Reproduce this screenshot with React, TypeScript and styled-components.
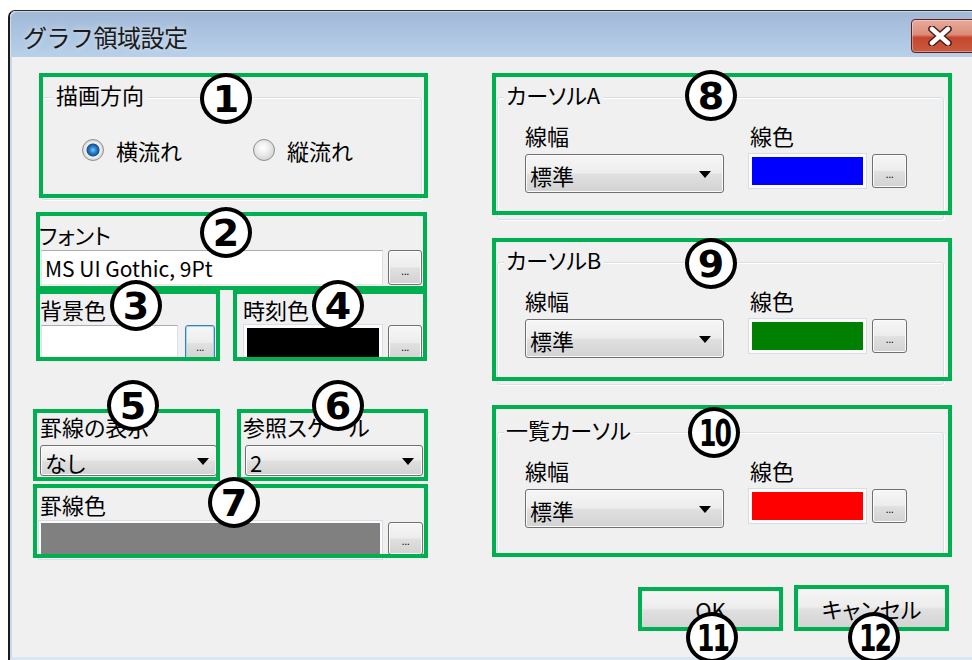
import React from 'react'
import styled, { createGlobalStyle } from 'styled-components'

const GlobalStyle = createGlobalStyle`
  * { box-sizing: border-box; }
  html, body { margin: 0; padding: 0; background: #ffffff; overflow: hidden; }
  body {
    width: 972px;
    height: 660px;
    font-family: "Noto Sans CJK JP", "Noto Sans", sans-serif;
    color: #000;
  }
`;

const GREEN = '#00b050';
const FACE = '#f0f0f0';
const BUTTON_BG = 'linear-gradient(180deg, #f6f6f6 0%, #ededed 48%, #e0e0e0 52%, #d2d2d2 100%)';

const Dialog = styled.div`
  width: 1010px;
  height: 650px;
  margin: 10px 0 0 8px;
  border-left: 2px solid #1b1b1b;
  border-top: 1px solid #2b2b2b;
  border-top-left-radius: 7px;
  display: flex;
  flex-direction: column;
  background: ${FACE};
`;

const TitleBar = styled.div`
  height: 46px;
  flex: none;
  display: flex;
  align-items: flex-start;
  justify-content: space-between;
  padding-left: 13px;
  border-top-left-radius: 6px;
  background: linear-gradient(180deg, #a1b9d7 0%, #adc5e1 55%, #b9d0e9 100%);
  box-shadow: inset 1px 1px 0 rgba(255, 255, 255, 0.45);
`;

const Title = styled.span`
  margin-top: 12px;
  font-size: 24px;
  line-height: 28px;
  color: #1a1a1a;
  letter-spacing: -0.5px;
  text-shadow: 0 0 6px rgba(255, 255, 255, 0.6);
`;

const CloseButton = styled.div`
  width: 78px;
  height: 34px;
  margin: 8px 29px 0 0;
  padding-left: 15px;
  display: flex;
  align-items: center;
  border: 1px solid #5e2119;
  border-radius: 4px;
  background: linear-gradient(180deg, #e8aa9b 0%, #dc8d79 45%, #c5472d 55%, #c95b40 100%);
  box-shadow: inset 0 0 0 1px rgba(255, 255, 255, 0.35);
`;

const Client = styled.div`
  flex: 1;
  display: flex;
  gap: 64px;
  padding: 16px 0 0 21px;
  border-left: 2px solid #c9d9ec;
  border-bottom: 3px solid #dce6f1;
  background: ${FACE};
`;

const Column = styled.div<{ $w: number }>`
  width: ${p => p.$w}px;
  flex: none;
  display: flex;
  flex-direction: column;
`;

const PairRow = styled.div<{ $mt?: number }>`
  display: flex;
  align-items: flex-start;
  margin-top: ${p => p.$mt ?? 0}px;
`;

// green annotation frame, drawn over what it marks
const Marked = styled.div<{ $w: number; $h: number; $ml?: number; $mt?: number }>`
  position: relative;
  flex: none;
  width: ${p => p.$w}px;
  height: ${p => p.$h}px;
  margin-left: ${p => p.$ml ?? 0}px;
  margin-top: ${p => p.$mt ?? 0}px;

  &::after {
    content: '';
    position: absolute;
    inset: 0;
    border: 4px solid ${GREEN};
    pointer-events: none;
    z-index: 2;
  }
`;

const Badge = styled.div<{ $x: number; $y: number }>`
  position: absolute;
  left: ${p => p.$x}px;
  top: ${p => p.$y}px;
  width: 52px;
  height: 51px;
  border: 4px solid #000;
  border-radius: 50%;
  background: #fff;
  display: flex;
  align-items: center;
  justify-content: center;
  z-index: 3;
  font-family: "DejaVu Sans", "Liberation Sans", sans-serif;
  font-weight: bold;
  font-size: 38px;
  line-height: 1;
  color: #000;
`;

const BadgeDigits = styled.span<{ $two?: boolean }>`
  display: inline-block;
  margin-top: 1px;
  letter-spacing: ${p => (p.$two ? '-3px' : '0')};
  transform: ${p => (p.$two ? 'scaleX(0.66)' : 'none')};
`;

const GroupFrame = styled.div<{ $l: number; $t: number; $w: number; $h: number }>`
  position: relative;
  flex: none;
  margin: ${p => p.$t}px 0 0 ${p => p.$l}px;
  width: ${p => p.$w}px;
  height: ${p => p.$h}px;
  border: 1px solid #d5dfe5;
  border-radius: 3px;
  box-shadow: inset 1px 1px 0 #ffffff, 1px 1px 0 #ffffff;
`;

const GroupCaption = styled.span<{ $l: number }>`
  position: absolute;
  top: -17px;
  left: ${p => p.$l}px;
  padding: 0 3px 0 2px;
  background: ${FACE};
  font-size: 22px;
  line-height: 26px;
  white-space: nowrap;
  font-feature-settings: "palt";
`;

const Label = styled.div<{ $pl?: number; $pt?: number }>`
  padding: ${p => p.$pt ?? 0}px 0 0 ${p => p.$pl ?? 0}px;
  font-size: 22px;
  line-height: 26px;
  white-space: nowrap;
  font-feature-settings: "palt";
`;

const FieldRow = styled.div<{ $ml?: number; $mt?: number; $gap: number }>`
  display: flex;
  align-items: flex-start;
  gap: ${p => p.$gap}px;
  margin: ${p => p.$mt ?? 0}px 0 0 ${p => p.$ml ?? 0}px;
`;

const RadioRow = styled.div`
  display: grid;
  grid-template-columns: 171px auto;
  align-items: center;
  margin: 40px 0 0 40px;
`;

const RadioOption = styled.label`
  display: flex;
  align-items: center;
  gap: 12px;
  font-size: 22px;
  line-height: 24px;
`;

const Radio = styled.span<{ $on?: boolean }>`
  width: 22px;
  height: 22px;
  flex: none;
  border-radius: 50%;
  border: 1px solid #8e8f8f;
  background: ${p =>
    p.$on
      ? 'radial-gradient(circle at 50% 50%, #7cc7f5 0, #2c86d4 3px, #17508f 6px, #f6f6f6 7px, #e9e9e9 8px, #cdcdcd 11px)'
      : 'radial-gradient(circle at 45% 40%, #ffffff 0, #f1f1f1 5px, #d9d9d9 11px)'};
`;

const TextBox = styled.div<{ $w: number; $h: number }>`
  width: ${p => p.$w}px;
  height: ${p => p.$h}px;
  flex: none;
  display: flex;
  align-items: center;
  padding-left: 3px;
  background: #ffffff;
  border: 1px solid;
  border-color: #abadb3 #dbdfe6 #e3e9ef #e2e3ea;
  font-size: 21px;
  white-space: nowrap;
`;

const Swatch = styled.div<{ $w: number; $h: number; $color: string; $ring: number; $mt?: number }>`
  width: ${p => p.$w}px;
  height: ${p => p.$h}px;
  flex: none;
  margin-top: ${p => p.$mt ?? 0}px;
  background: ${p => p.$color};
  border: 1px solid #d6dde6;
  box-shadow: inset 0 0 0 ${p => p.$ring}px #fbfbfb;
`;

const DotButton = styled.div<{ $w: number; $h: number; $focus?: boolean; $mt?: number }>`
  width: ${p => p.$w}px;
  height: ${p => p.$h}px;
  flex: none;
  margin-top: ${p => p.$mt ?? 0}px;
  display: flex;
  align-items: flex-end;
  justify-content: center;
  padding-bottom: 7px;
  border: 1px solid ${p => (p.$focus ? '#3c7fb1' : '#707070')};
  border-radius: 3px;
  background: ${BUTTON_BG};
  box-shadow: inset 0 0 0 1px ${p => (p.$focus ? '#9fd6f4' : '#fbfbfb')};
  font-family: "DejaVu Sans", sans-serif;
  font-size: 10px;
  line-height: 1;
  letter-spacing: -0.5px;
`;

const Combo = styled.div<{ $w: number; $h: number; $pr: number }>`
  width: ${p => p.$w}px;
  height: ${p => p.$h}px;
  flex: none;
  display: flex;
  align-items: center;
  justify-content: space-between;
  padding: 2px ${p => p.$pr}px 0 4px;
  border: 1px solid #707070;
  border-radius: 3px;
  background: ${BUTTON_BG};
  box-shadow: inset 0 0 0 1px #fbfbfb;
  font-size: 22px;
  font-feature-settings: "palt";
`;

const ComboArrow = styled.span`
  width: 0;
  height: 0;
  border-left: 6px solid transparent;
  border-right: 6px solid transparent;
  border-top: 7px solid #000;
`;

const CursorGrid = styled.div`
  display: grid;
  grid-template-columns: 223px auto;
  margin: 24px 0 0 27px;
`;

const ButtonRow = styled.div`
  display: flex;
  align-items: flex-start;
  justify-content: flex-end;
  gap: 11px;
  padding-right: 3px;
  margin-top: 28px;
`;

const PushButton = styled.div`
  width: 100%;
  height: 100%;
  display: flex;
  align-items: center;
  justify-content: center;
  border: 1px solid #707070;
  border-radius: 3px;
  background: ${BUTTON_BG};
  box-shadow: inset 0 0 0 1px #fbfbfb;
  font-size: 22px;
  font-feature-settings: "palt";
`;

const CloseIcon = () => (
  <svg width="26" height="20" viewBox="0 0 26 20">
    <path d="M5 3 L21 17 M21 3 L5 17" stroke="#4d1c15" strokeWidth="7.5" strokeLinecap="round" fill="none" />
    <path d="M5 3 L21 17 M21 3 L5 17" stroke="#ffffff" strokeWidth="4.5" strokeLinecap="round" fill="none" />
  </svg>
);

type NumProps = { n: number; x: number; y: number }

const Num = ({ n, x, y }: NumProps) => (
  <Badge $x={x} $y={y}>
    <BadgeDigits $two={n > 9}>{n}</BadgeDigits>
  </Badge>
);

type CursorProps = {
  caption: string
  color: string
  mt: number
  h: number
  frameTop: number
  n: number
  bx: number
  by: number
}

const CursorGroup = ({ caption, color, mt, h, frameTop, n, bx, by }: CursorProps) => (
  <Marked $w={460} $h={h} $mt={mt}>
    <GroupFrame $l={5} $t={frameTop} $w={447} $h={123}>
      <GroupCaption $l={6}>{caption}</GroupCaption>
      <CursorGrid>
        <div>
          <Label>線幅</Label>
          <FieldRow $mt={6} $gap={0}>
            <Combo $w={199} $h={39} $pr={12}>
              標準
              <ComboArrow />
            </Combo>
          </FieldRow>
        </div>
        <div>
          <Label $pl={2}>線色</Label>
          <FieldRow $mt={5} $gap={5}>
            <Swatch $w={119} $h={36} $color={color} $ring={3} />
            <DotButton $w={35} $h={34} $mt={1}>...</DotButton>
          </FieldRow>
        </div>
      </CursorGrid>
    </GroupFrame>
    <Num n={n} x={bx} y={by} />
  </Marked>
);

const App = () => {
  return (
    <>
      <GlobalStyle />
      <Dialog>
        <TitleBar>
          <Title>グラフ領域設定</Title>
          <CloseButton>
            <CloseIcon />
          </CloseButton>
        </TitleBar>
        <Client>
          <Column $w={395}>
            <Marked $w={389} $h={125} $ml={6}>
              <GroupFrame $l={2} $t={24} $w={381} $h={103}>
                <GroupCaption $l={12}>描画方向</GroupCaption>
                <RadioRow>
                  <RadioOption><Radio $on />横流れ</RadioOption>
                  <RadioOption><Radio />縦流れ</RadioOption>
                </RadioRow>
              </GroupFrame>
              <Num n={1} x={161} y={0} />
            </Marked>

            <Marked $w={391} $h={78} $ml={3} $mt={14}>
              <Label $pl={3} $pt={9}>フォント</Label>
              <FieldRow $ml={5} $mt={3} $gap={5}>
                <TextBox $w={342} $h={35}>MS UI Gothic, 9Pt</TextBox>
                <DotButton $w={34} $h={35}>...</DotButton>
              </FieldRow>
              <Num n={2} x={164} y={-5} />
            </Marked>

            <PairRow>
              <Marked $w={184} $h={71} $ml={3}>
                <Label $pl={4} $pt={6}>背景色</Label>
                <FieldRow $ml={5} $mt={3} $gap={7}>
                  <TextBox $w={137} $h={36} />
                  <DotButton $w={30} $h={36} $focus>...</DotButton>
                </FieldRow>
                <Num n={3} x={74} y={-10} />
              </Marked>
              <Marked $w={194} $h={71} $ml={13}>
                <Label $pl={10} $pt={6}>時刻色</Label>
                <FieldRow $ml={10} $mt={2} $gap={5}>
                  <Swatch $w={140} $h={37} $color="#000000" $ring={3} />
                  <DotButton $w={34} $h={36} $mt={1}>...</DotButton>
                </FieldRow>
                <Num n={4} x={79} y={-10} />
              </Marked>
            </PairRow>

            <PairRow $mt={48}>
              <Marked $w={187} $h={72}>
                <Label $pl={7} $pt={4}>罫線の表示</Label>
                <FieldRow $ml={7} $mt={6} $gap={0}>
                  <Combo $w={177} $h={31} $pr={7}>
                    なし
                    <ComboArrow />
                  </Combo>
                </FieldRow>
                <Num n={5} x={74} y={-29} />
              </Marked>
              <Marked $w={191} $h={72} $ml={17}>
                <Label $pl={6} $pt={4}>参照スケール</Label>
                <FieldRow $ml={8} $mt={6} $gap={0}>
                  <Combo $w={178} $h={31} $pr={8}>
                    2
                    <ComboArrow />
                  </Combo>
                </FieldRow>
                <Num n={6} x={75} y={-29} />
              </Marked>
            </PairRow>

            <Marked $w={395} $h={74} $mt={3}>
              <Label $pl={7} $pt={7}>罫線色</Label>
              <FieldRow $ml={5} $mt={3} $gap={5}>
                <Swatch $w={345} $h={40} $color="#808080" $ring={2} />
                <DotButton $w={35} $h={33} $mt={2}>...</DotButton>
              </FieldRow>
              <Num n={7} x={175} y={-7} />
            </Marked>
          </Column>

          <Column $w={460}>
            <CursorGroup caption="カーソルA" color="#0000ff" mt={0} h={142} frameTop={24} n={8} bx={193} by={-3} />
            <CursorGroup caption="カーソルB" color="#008000" mt={23} h={143} frameTop={24} n={9} bx={193} by={0} />
            <CursorGroup caption="一覧カーソル" color="#ff0000" mt={24} h={152} frameTop={27} n={10} bx={196} by={2} />

            <ButtonRow>
              <Marked $w={145} $h={44} $mt={2}>
                <PushButton>OK</PushButton>
                <Num n={11} x={48} y={25} />
              </Marked>
              <Marked $w={155} $h={46}>
                <PushButton>キャンセル</PushButton>
                <Num n={12} x={54} y={27} />
              </Marked>
            </ButtonRow>
          </Column>
        </Client>
      </Dialog>
    </>
  )
}

export default App
